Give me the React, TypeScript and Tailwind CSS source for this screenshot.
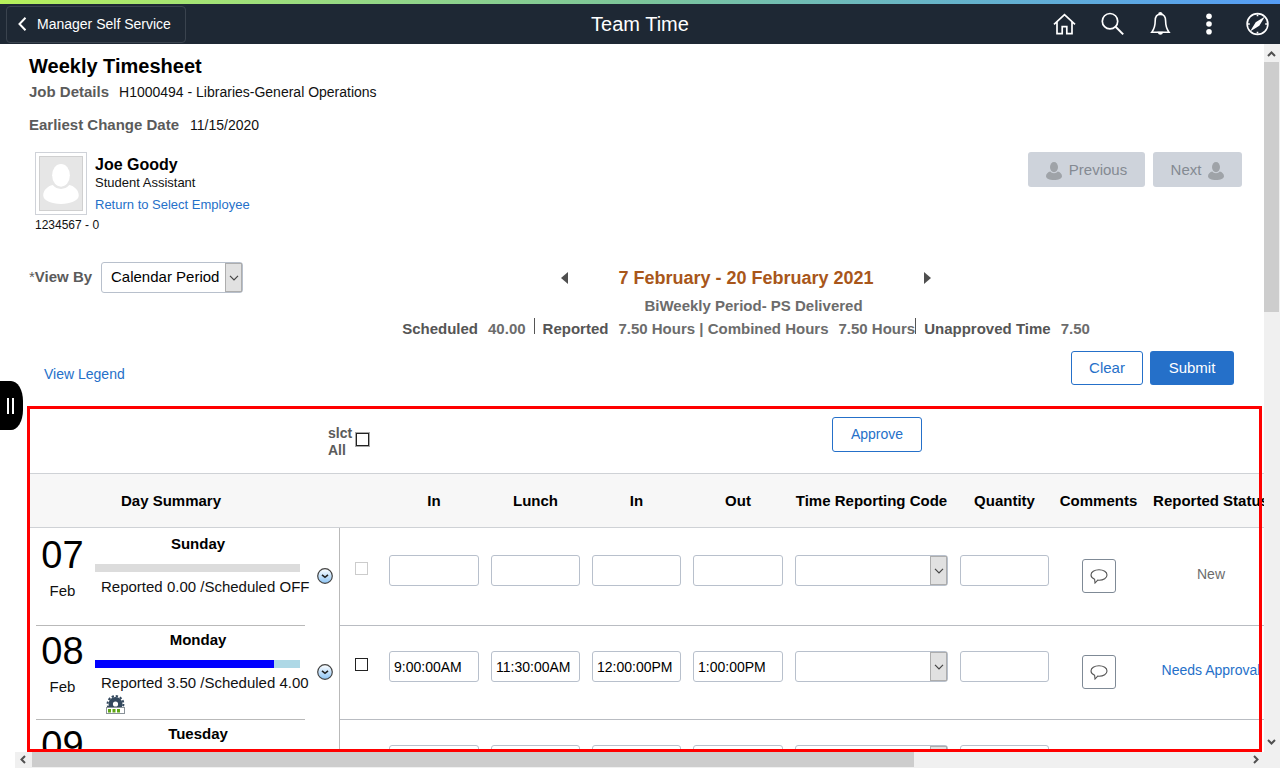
import React from "react";

type Day = {
  num: string;
  name: string;
  reported: string;
  scheduled: string;
  percent: number | null;
  processing: boolean;
  times: string[];
  selectable: boolean;
  status: string;
  linked: boolean;
};

const days: Day[] = [
  {
    num: "07",
    name: "Sunday",
    reported: "0.00",
    scheduled: "OFF",
    percent: null,
    processing: false,
    times: ["", "", "", ""],
    selectable: false,
    status: "New",
    linked: false,
  },
  {
    num: "08",
    name: "Monday",
    reported: "3.50",
    scheduled: "4.00",
    percent: 87.5,
    processing: true,
    times: ["9:00:00AM", "11:30:00AM", "12:00:00PM", "1:00:00PM"],
    selectable: true,
    status: "Needs Approval",
    linked: true,
  },
  {
    num: "09",
    name: "Tuesday",
    reported: "4.00",
    scheduled: "4.00",
    percent: 100,
    processing: true,
    times: ["", "", "", ""],
    selectable: true,
    status: "Needs Approval",
    linked: true,
  },
];

const timeLabels = ["In", "Lunch", "In", "Out"];

function PersonIcon({ className }: { className: string }) {
  return (
    <svg viewBox="0 0 16 18" className={className} fill="currentColor" aria-hidden="true">
      <ellipse cx="8" cy="5.100" rx="4" ry="5.100" />
      <path d="M0 14.200c0-2.400 2-4.200 4.300-4.700 1 1.200 2.200 1.700 3.700 1.700s2.700-.5 3.700-1.700c2.300.5 4.300 2.300 4.300 4.700 0 2.200-3.600 3.800-8 3.800s-8-1.600-8-3.800z" />
    </svg>
  );
}

function DropDown({
  label,
  id,
  options,
  className,
}: {
  label?: string;
  id?: string;
  options: string[];
  className: string;
}) {
  return (
    <div className={`relative h-[31px] ${className}`}>
      <select
        id={id}
        aria-label={label}
        className="h-full w-full appearance-none rounded-[3px] border border-[#b8c0cc] bg-white pr-5 pl-[9px] text-[15px] text-black"
      >
        {options.map((option) => (
          <option key={option}>{option}</option>
        ))}
      </select>
      <span className="pointer-events-none absolute inset-y-px right-px flex w-[17px] items-center justify-center border border-[#adadad] bg-[#e1e1e1]">
        <svg viewBox="0 0 10 6" className="h-1.5 w-2.5" fill="none" stroke="#444" strokeWidth="1.200" aria-hidden="true">
          <path d="M1 .8l4 4 4-4" />
        </svg>
      </span>
    </div>
  );
}

function Header() {
  return (
    <header className="shrink-0">
      <div className="h-1 bg-linear-to-r from-[#b6f05a] via-[#7cc59a] to-[#559cf5]" />
      <div className="grid h-10 grid-cols-3 items-center bg-[#1e2834] text-white">
        <div className="pl-1.5">
          <button
            type="button"
            className="flex h-[37px] w-[180px] items-center gap-2 rounded border border-[#3a434e] pl-2.5 text-[14px]"
          >
            <svg viewBox="0 0 12 14" className="h-3.5 w-3" fill="none" stroke="#fff" strokeWidth="2" aria-hidden="true">
              <path d="M8.500 .8L2.500 7l6 6.200" />
            </svg>
            Manager Self Service
          </button>
        </div>
        <h1 className="text-center text-[20px]">Team Time</h1>
        <nav className="flex items-center justify-end gap-6 pr-[11px]">
          <button type="button" aria-label="Home">
            <svg viewBox="0 0 24 24" className="size-6" fill="none" stroke="#fff" strokeWidth="1.7" aria-hidden="true">
              <path d="M1 12.300L11.500 2.600 22 12.300M4 10v11.600h5.200v-7h4.600v7H19V10" />
            </svg>
          </button>
          <button type="button" aria-label="Search">
            <svg viewBox="0 0 24 24" className="size-6" fill="none" stroke="#fff" strokeWidth="1.7" aria-hidden="true">
              <circle cx="9" cy="9.200" r="7.700" />
              <path d="M14.600 14.800l7.600 7.600" strokeWidth="2" />
            </svg>
          </button>
          <button type="button" aria-label="Notifications">
            <svg viewBox="0 0 24 24" className="size-6" fill="none" stroke="#fff" strokeWidth="1.6" aria-hidden="true">
              <path d="M11.400 2.300c-3.800 0-5.200 3-5.200 6.500 0 5-1 8.300-3.400 11.400h17.200c-2.400-3.100-3.400-6.400-3.400-11.400 0-3.500-1.400-6.500-5.200-6.500z" />
              <path d="M9.900 2.400a1.500 1.500 0 0 1 3 0z" fill="#fff" />
              <path d="M9.500 20.500a2 2 0 0 0 3.800 0z" fill="#fff" />
            </svg>
          </button>
          <button type="button" aria-label="Actions">
            <svg viewBox="0 0 24 24" className="size-6" fill="#fff" aria-hidden="true">
              <circle cx="12" cy="4.200" r="2.800" />
              <circle cx="12" cy="12" r="2.800" />
              <circle cx="12" cy="19.800" r="2.800" />
            </svg>
          </button>
          <button type="button" aria-label="Navigator">
            <svg viewBox="0 0 24 24" className="size-6" fill="none" stroke="#fff" aria-hidden="true">
              <circle cx="12.500" cy="12" r="10.400" strokeWidth="1.600" />
              <path d="M12.500 2.500v1.800M12.500 19.700v1.800M3 12h1.800M20.200 12H22" strokeWidth="1.600" />
              <path d="M20 4.500l-5.700 9.200L5 19.500l5.700-9.200z" fill="#fff" stroke="none" />
            </svg>
          </button>
        </nav>
      </div>
    </header>
  );
}

function Employee() {
  return (
    <section className="mt-[17px] flex items-start justify-between pr-[22px]">
      <div className="pl-1.5">
        <div className="flex gap-2">
          <div className="h-[63px] w-[52px] border border-[#cfd2d8] bg-white p-[3px]">
            <div className="flex h-full items-center justify-center border border-[#d0d0d0] bg-[#e6e6e6]">
              <PersonIcon className="h-10 w-9 text-white" />
            </div>
          </div>
          <div>
            <p className="pt-[3px] text-[16px] leading-5 font-bold text-black">Joe Goody</p>
            <p className="text-[13px] leading-4">Student Assistant</p>
            <a href="#employees" className="mt-1.5 block text-[13px] leading-4 text-[#2570c9]">
              Return to Select Employee
            </a>
          </div>
        </div>
        <p className="text-[12px] leading-5">1234567 - 0</p>
      </div>
      <div className="flex gap-2">
        <button
          type="button"
          disabled
          className="flex h-[35px] w-[117px] items-center justify-center gap-[7px] rounded-[3px] bg-[#ced3db] pt-0.5 text-[15px] text-[#848a92]"
        >
          <PersonIcon className="h-[18px] w-4 text-[#9fa3a8]" />
          Previous
        </button>
        <button
          type="button"
          disabled
          className="flex h-[35px] w-[89px] items-center justify-center gap-[7px] rounded-[3px] bg-[#ced3db] pt-0.5 text-[15px] text-[#848a92]"
        >
          Next
          <PersonIcon className="h-[18px] w-4 text-[#9fa3a8]" />
        </button>
      </div>
    </section>
  );
}

function Period() {
  return (
    <section className="mt-[27px] flex items-start pr-[15px] font-bold">
      <div className="flex items-center">
        <label htmlFor="view-by" className="w-[72px] text-[15px] text-[#5b5b5b]">
          <span className="font-normal">*</span>View By
        </label>
        <DropDown id="view-by" options={["Calendar Period", "Day", "Week"]} className="w-[142px] font-normal" />
      </div>
      <div className="flex flex-1 flex-col items-center">
        <div className="flex h-8 items-center gap-[50px]">
          <button type="button" aria-label="Previous period">
            <svg viewBox="0 0 7 12" className="h-3 w-[7px]" fill="#4f4f4f" aria-hidden="true">
              <path d="M7 0v12L0 6z" />
            </svg>
          </button>
          <h3 className="text-[18px] text-[#a8561a]">7 February - 20 February 2021</h3>
          <button type="button" aria-label="Next period">
            <svg viewBox="0 0 7 12" className="h-3 w-[7px]" fill="#4f4f4f" aria-hidden="true">
              <path d="M0 0v12l7-6z" />
            </svg>
          </button>
        </div>
        <p className="mt-0.5 pl-[15px] text-[15px] leading-5 text-[#6c6c6c]">BiWeekly Period- PS Delivered</p>
        <div className="mt-0.5 flex text-[15px] leading-[21px] text-[#6c6c6c]">
          <p className="flex gap-2.5 pr-2">
            <span className="text-[#555]">Scheduled</span>
            <span>40.00</span>
          </p>
          <span className="h-4 border-l border-[#555]" />
          <p className="flex gap-2.5 pl-2">
            <span className="text-[#555]">Reported</span>
            <span>7.50 Hours | Combined Hours</span>
            <span>7.50 Hours</span>
          </p>
          <span className="h-4 border-l border-[#555]" />
          <p className="flex gap-2.5 pl-2">
            <span className="text-[#555]">Unapproved Time</span>
            <span>7.50</span>
          </p>
        </div>
      </div>
    </section>
  );
}

function DayCell({ day }: { day: Day }) {
  return (
    <div className="flex">
      <div className="ml-1.5 flex h-full w-[269px] shrink-0">
        <div className="w-[53px] shrink-0 pt-[7px] text-center">
          <div className="text-[38px] leading-9 text-black">{day.num}</div>
          <div className="mt-2 text-[15px] leading-5">Feb</div>
        </div>
        <div className="ml-1.5 min-w-0 flex-1 pt-1">
          <p className="pr-1 text-center text-[15px] leading-5 font-bold text-black">{day.name}</p>
          <div className="mt-2.5 h-2 w-[205px] bg-[#dcdcdc]">
            {day.percent !== null && (
              <div className="h-full bg-[#add8e6]">
                <div className="h-full bg-[#0000ff]" style={{ width: `${day.percent}%` }} />
              </div>
            )}
          </div>
          <p className="mt-[5px] pl-1.5 text-[15px] leading-5 whitespace-nowrap">
            Reported {day.reported} /Scheduled {day.scheduled}
          </p>
          {day.processing && (
            <svg viewBox="0 0 19 20" className="mt-0.5 ml-[11px] h-5 w-[19px]" aria-hidden="true">
              <circle cx="9.500" cy="9" r="4.800" fill="none" stroke="#34495e" strokeWidth="4.400" />
              <circle cx="9.500" cy="9" r="7.900" fill="none" stroke="#34495e" strokeWidth="2" strokeDasharray="2.300 1.836" />
              <rect x=".5" y="12.500" width="18" height="6" fill="#fff" stroke="#8a9299" />
              <path d="M2 14h3v3.500H2zM6.500 14h3v3.500h-3zM11 14h3v3.500h-3z" fill="#5ea514" />
            </svg>
          )}
        </div>
      </div>
      <button type="button" aria-label={`${day.name} details`} className="mt-[38px] ml-3 h-4 w-4">
        <svg viewBox="0 0 16 16" className="size-4" aria-hidden="true">
          <defs>
            <linearGradient id={`ball-${day.num}`} x1="0" y1="0" x2="0" y2="1">
              <stop offset="0" stopColor="#fff" />
              <stop offset="1" stopColor="#8cc4f5" />
            </linearGradient>
          </defs>
          <circle cx="8" cy="8" r="7.300" fill={`url(#ball-${day.num})`} stroke="#444" strokeWidth="1.200" />
          <path d="M5 6.800l3 2.500 3-2.500" fill="none" stroke="#222" strokeWidth="1.600" />
        </svg>
      </button>
    </div>
  );
}

const headCell = "border-y border-[#cfd2d6] bg-[#f7f7f7] p-0 pt-0.5 text-center font-bold text-black whitespace-nowrap";
const bodyCell = "border-b border-b-[#b9bcc2] p-0 px-1.5 align-top";
const field = "h-[31px] w-full rounded-[3px] border border-[#b8c0cc] bg-white px-1 text-[14px] text-black";

function Timesheet() {
  return (
    <section className="relative mt-[21px] -ml-0.5 min-h-0 flex-1 overflow-hidden pt-[3px] pl-[3px]">
      <div className="flex h-16 items-start">
        <div className="flex w-[802px] items-start pt-4 pl-[298px]">
          <label htmlFor="select-all" className="w-7 text-[14px] leading-[17px] font-bold text-[#5b5b5b]">
            slct All
          </label>
          <input
            id="select-all"
            type="checkbox"
            className="mt-2 size-[13px] appearance-none border border-[#222] bg-white ring-1 ring-[#a8a8a8]"
          />
        </div>
        <button
          type="button"
          className="mt-2 h-[35px] w-[90px] rounded-[3px] border border-[#2570c9] bg-white text-[14px] text-[#2570c9]"
        >
          Approve
        </button>
      </div>
      <table className="w-[1250px] table-fixed border-separate border-spacing-0 text-[15px]">
        <colgroup>
          <col className="w-[310px]" />
          <col className="w-[43px]" />
          <col className="w-[102px]" />
          <col className="w-[101px]" />
          <col className="w-[101px]" />
          <col className="w-[102px]" />
          <col className="w-[165px]" />
          <col className="w-[101px]" />
          <col className="w-[87px]" />
          <col />
        </colgroup>
        <thead>
          <tr className="h-[55px]">
            <th scope="col" className={`${headCell} pr-7`}>Day Summary</th>
            <td className={headCell} />
            <th scope="col" className={headCell}>In</th>
            <th scope="col" className={headCell}>Lunch</th>
            <th scope="col" className={headCell}>In</th>
            <th scope="col" className={headCell}>Out</th>
            <th scope="col" className={headCell}>Time Reporting Code</th>
            <th scope="col" className={headCell}>Quantity</th>
            <th scope="col" className={headCell}>Comments</th>
            <th scope="col" className={headCell}>Reported Status</th>
          </tr>
        </thead>
        <tbody>
          {days.map((day, index) => {
            const top = index === 0 ? "pt-0.5" : "";
            return (
              <tr key={day.num} className={index === 0 ? "h-[98px]" : "h-[94px]"}>
                <th scope="row" className="relative border-r border-[#b9b9b9] p-0 text-left align-top font-normal">
                  <div className={top}>
                    <DayCell day={day} />
                  </div>
                  <span className="absolute bottom-0 left-1.5 w-[269px] border-b border-[#b9b9b9]" />
                </th>
                <td className={bodyCell}>
                  <div className={top}>
                    <input
                      type="checkbox"
                      aria-label={`Select ${day.name}`}
                      disabled={!day.selectable}
                      className="mt-8 ml-[9px] block size-[13px] appearance-none border border-[#222] bg-white disabled:border-[#ccc]"
                    />
                  </div>
                </td>
                {day.times.map((time, slot) => (
                  <td key={slot} className={bodyCell}>
                    <div className={top}>
                      <input
                        type="text"
                        aria-label={`${day.name} ${timeLabels[slot]}`}
                        defaultValue={time}
                        className={`mt-[25px] ${field}`}
                      />
                    </div>
                  </td>
                ))}
                <td className={bodyCell}>
                  <div className={top}>
                    <DropDown label={`${day.name} time reporting code`} options={[""]} className="mt-[25px] w-full" />
                  </div>
                </td>
                <td className={bodyCell}>
                  <div className={top}>
                    <input type="text" aria-label={`${day.name} quantity`} className={`mt-[25px] ${field}`} />
                  </div>
                </td>
                <td className={bodyCell}>
                  <div className={`${top} flex justify-center`}>
                    <button
                      type="button"
                      aria-label={`${day.name} comments`}
                      className="mt-[29px] flex size-[34px] items-center justify-center rounded-[3px] border border-[#7f8a96] bg-white"
                    >
                      <svg viewBox="0 0 18 16" className="h-4 w-[18px]" fill="none" stroke="#555" strokeWidth="1.100" aria-hidden="true">
                        <path d="M4.600 11.300C2.500 10.300 1 8.800 1 7c0-3 3.400-5.200 8-5.200S17 4 17 7s-3.400 5.200-8 5.200c-.4 0-.9 0-1.300-.1L5 15z" />
                      </svg>
                    </button>
                  </div>
                </td>
                <td className={`${bodyCell} whitespace-nowrap`}>
                  <div className={`${top} text-center`}>
                    <div className="pt-[34px] text-[14px] leading-5 text-[#6c6c6c]">
                      {day.linked ? (
                        <a href="#approval" className="text-[#2570c9]">
                          {day.status}
                        </a>
                      ) : (
                        day.status
                      )}
                    </div>
                  </div>
                </td>
              </tr>
            );
          })}
        </tbody>
      </table>
      <div className="pointer-events-none absolute inset-y-0 right-0.5 left-0 border-[3px] border-[#ff0000]" />
    </section>
  );
}

function Arrow({ d }: { d: string }) {
  return (
    <svg viewBox="0 0 16 16" className="size-4 shrink-0" fill="none" stroke="#505050" strokeWidth="2" aria-hidden="true">
      <path d={d} />
    </svg>
  );
}

export default function App() {
  return (
    <div className="flex h-screen flex-col overflow-hidden bg-white font-['Liberation_Sans',Arial,sans-serif] text-[15px] text-[#111]">
      <Header />
      <div className="relative flex min-h-0 flex-1">
        <div className="flex min-w-0 flex-1 flex-col">
          <main className="flex min-h-0 flex-1 flex-col pt-2.5 pl-[29px]">
            <h2 className="text-[20px] leading-6 font-bold text-black">Weekly Timesheet</h2>
            <dl className="mt-1 flex gap-2.5 leading-5">
              <dt className="font-bold text-[#5b5b5b]">Job Details</dt>
              <dd className="text-[14px]">H1000494 - Libraries-General Operations</dd>
            </dl>
            <dl className="mt-[13px] flex gap-[11px] leading-5">
              <dt className="font-bold text-[#5b5b5b]">Earliest Change Date</dt>
              <dd className="text-[14px]">11/15/2020</dd>
            </dl>
            <Employee />
            <Period />
            <div className="mt-3 flex items-end justify-between pr-[30px] pl-[15px]">
              <a href="#legend" className="text-[14px] leading-[22px] text-[#2570c9]">
                View Legend
              </a>
              <div className="flex gap-[7px]">
                <button
                  type="button"
                  className="h-[34px] w-[72px] rounded-[3px] border border-[#2570c9] bg-white text-[#2570c9]"
                >
                  Clear
                </button>
                <button type="button" className="h-[34px] w-[84px] rounded-[3px] bg-[#2570c9] text-white">
                  Submit
                </button>
              </div>
            </div>
            <Timesheet />
          </main>
          <div className="ml-[15px] flex h-4 shrink-0 bg-[#f0f0f0]" aria-hidden="true">
            <Arrow d="M10 4L6.500 7.500l3.500 3.500" />
            <span className="ml-px h-[15px] w-[882px] bg-[#cdcdcd]" />
            <span className="flex-1" />
            <Arrow d="M6 4l3.500 3.500L6 11" />
          </div>
        </div>
        <div className="flex w-4 shrink-0 flex-col bg-[#f0f0f0] pt-0.5 pb-[18px]" aria-hidden="true">
          <Arrow d="M4 10l3.500-3.500L11 10" />
          <span className="h-[250px] w-[15px] bg-[#cdcdcd]" />
          <span className="flex-1" />
          <Arrow d="M4 6l3.500 3.500L11 6" />
        </div>
        <button
          type="button"
          aria-label="Open side panel"
          className="absolute top-[337px] left-0 flex h-[49px] w-[23px] items-center justify-center gap-[3px] rounded-[0_12px_12px_0/0_20px_20px_0] bg-black pr-0.5"
        >
          <span className="h-4 w-0.5 bg-white" />
          <span className="h-4 w-0.5 bg-white" />
        </button>
      </div>
    </div>
  );
}
